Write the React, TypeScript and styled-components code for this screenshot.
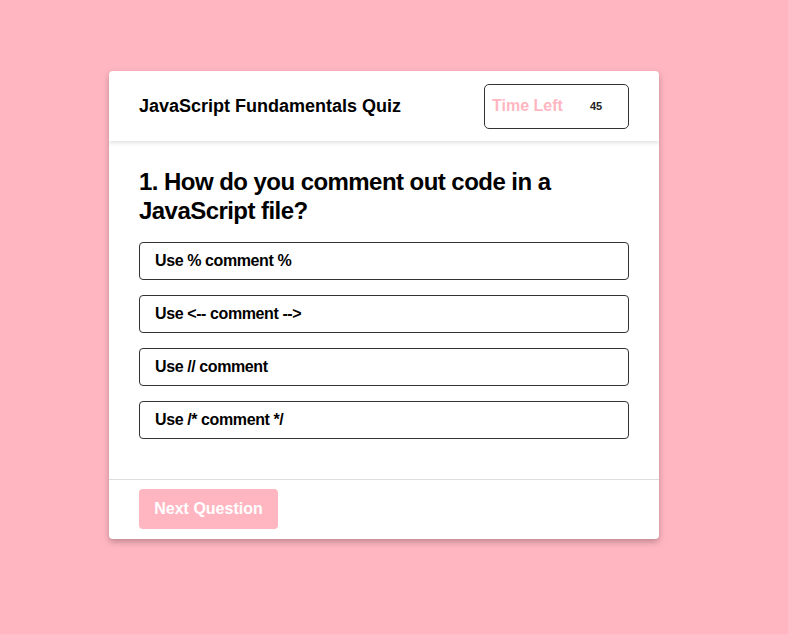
import React from "react";
import styled, { createGlobalStyle } from "styled-components";

const Global = createGlobalStyle`
  html, body { margin: 0; padding: 0; }
  body {
    background: #ffb6c1;
    font-family: "Liberation Sans", Arial, sans-serif;
  }
`;

const Page = styled.div`
  display: flex;
  align-items: flex-start;
  padding: 71px 0 0 109px;
  min-height: 634px;
  box-sizing: border-box;
`;

const Card = styled.div`
  width: 550px;
  background: #fff;
  border-radius: 4px;
  box-shadow: 0 3px 6px rgba(0, 0, 0, 0.25);
  overflow: hidden;
`;

const Header = styled.header`
  height: 70px;
  box-sizing: border-box;
  padding: 0 30px;
  display: flex;
  align-items: center;
  justify-content: space-between;
  box-shadow: 0 2px 4px rgba(0, 0, 0, 0.12);
  position: relative;
`;

const Title = styled.h1`
  margin: 0;
  font-size: 18px;
  font-weight: 700;
  color: #000;
`;

const Timer = styled.div`
  width: 145px;
  height: 45px;
  box-sizing: border-box;
  border: 1px solid #333;
  border-radius: 5px;
  display: flex;
  align-items: center;
  padding: 0 7px;
`;

const TimerLabel = styled.span`
  color: #ffb6c1;
  font-size: 16px;
  font-weight: 700;
  width: 98px;
`;

const TimerValue = styled.span`
  font-size: 11px;
  font-weight: 700;
  color: #222;
`;

const Body = styled.section`
  padding: 26px 30px 40px;
  border-bottom: 1px solid #ddd;
`;

const Question = styled.h2`
  margin: 0 0 17px;
  font-size: 24px;
  line-height: 29px;
  letter-spacing: -0.55px;
  font-weight: 700;
  color: #000;
`;

const Options = styled.div`
  display: flex;
  flex-direction: column;
  gap: 15px;
`;

const Option = styled.button`
  height: 38px;
  box-sizing: border-box;
  border: 1px solid #333;
  border-radius: 4px;
  background: #fff;
  text-align: left;
  padding: 0 15px;
  font-family: inherit;
  font-size: 16px;
  letter-spacing: -0.4px;
  font-weight: 700;
  color: #000;
`;

const Footer = styled.footer`
  padding: 9px 30px 10px;
`;

const NextButton = styled.button`
  display: block;
  width: 139px;
  height: 40px;
  border: none;
  border-radius: 4px;
  background: #ffb6c1;
  color: #fff;
  font-family: inherit;
  font-size: 16px;
  font-weight: 700;
`;

const options = ["Use % comment %", "Use <-- comment -->", "Use // comment", "Use /* comment */"];

export default function App() {
  return (
    <>
      <Global />
      <Page>
        <Card>
          <Header>
            <Title>JavaScript Fundamentals Quiz</Title>
            <Timer>
              <TimerLabel>Time Left</TimerLabel>
              <TimerValue>45</TimerValue>
            </Timer>
          </Header>
          <Body>
            <Question>1. How do you comment out code in a JavaScript file?</Question>
            <Options>
              {options.map((o) => (
                <Option key={o}>{o}</Option>
              ))}
            </Options>
          </Body>
          <Footer>
            <NextButton>Next Question</NextButton>
          </Footer>
        </Card>
      </Page>
    </>
  );
}
